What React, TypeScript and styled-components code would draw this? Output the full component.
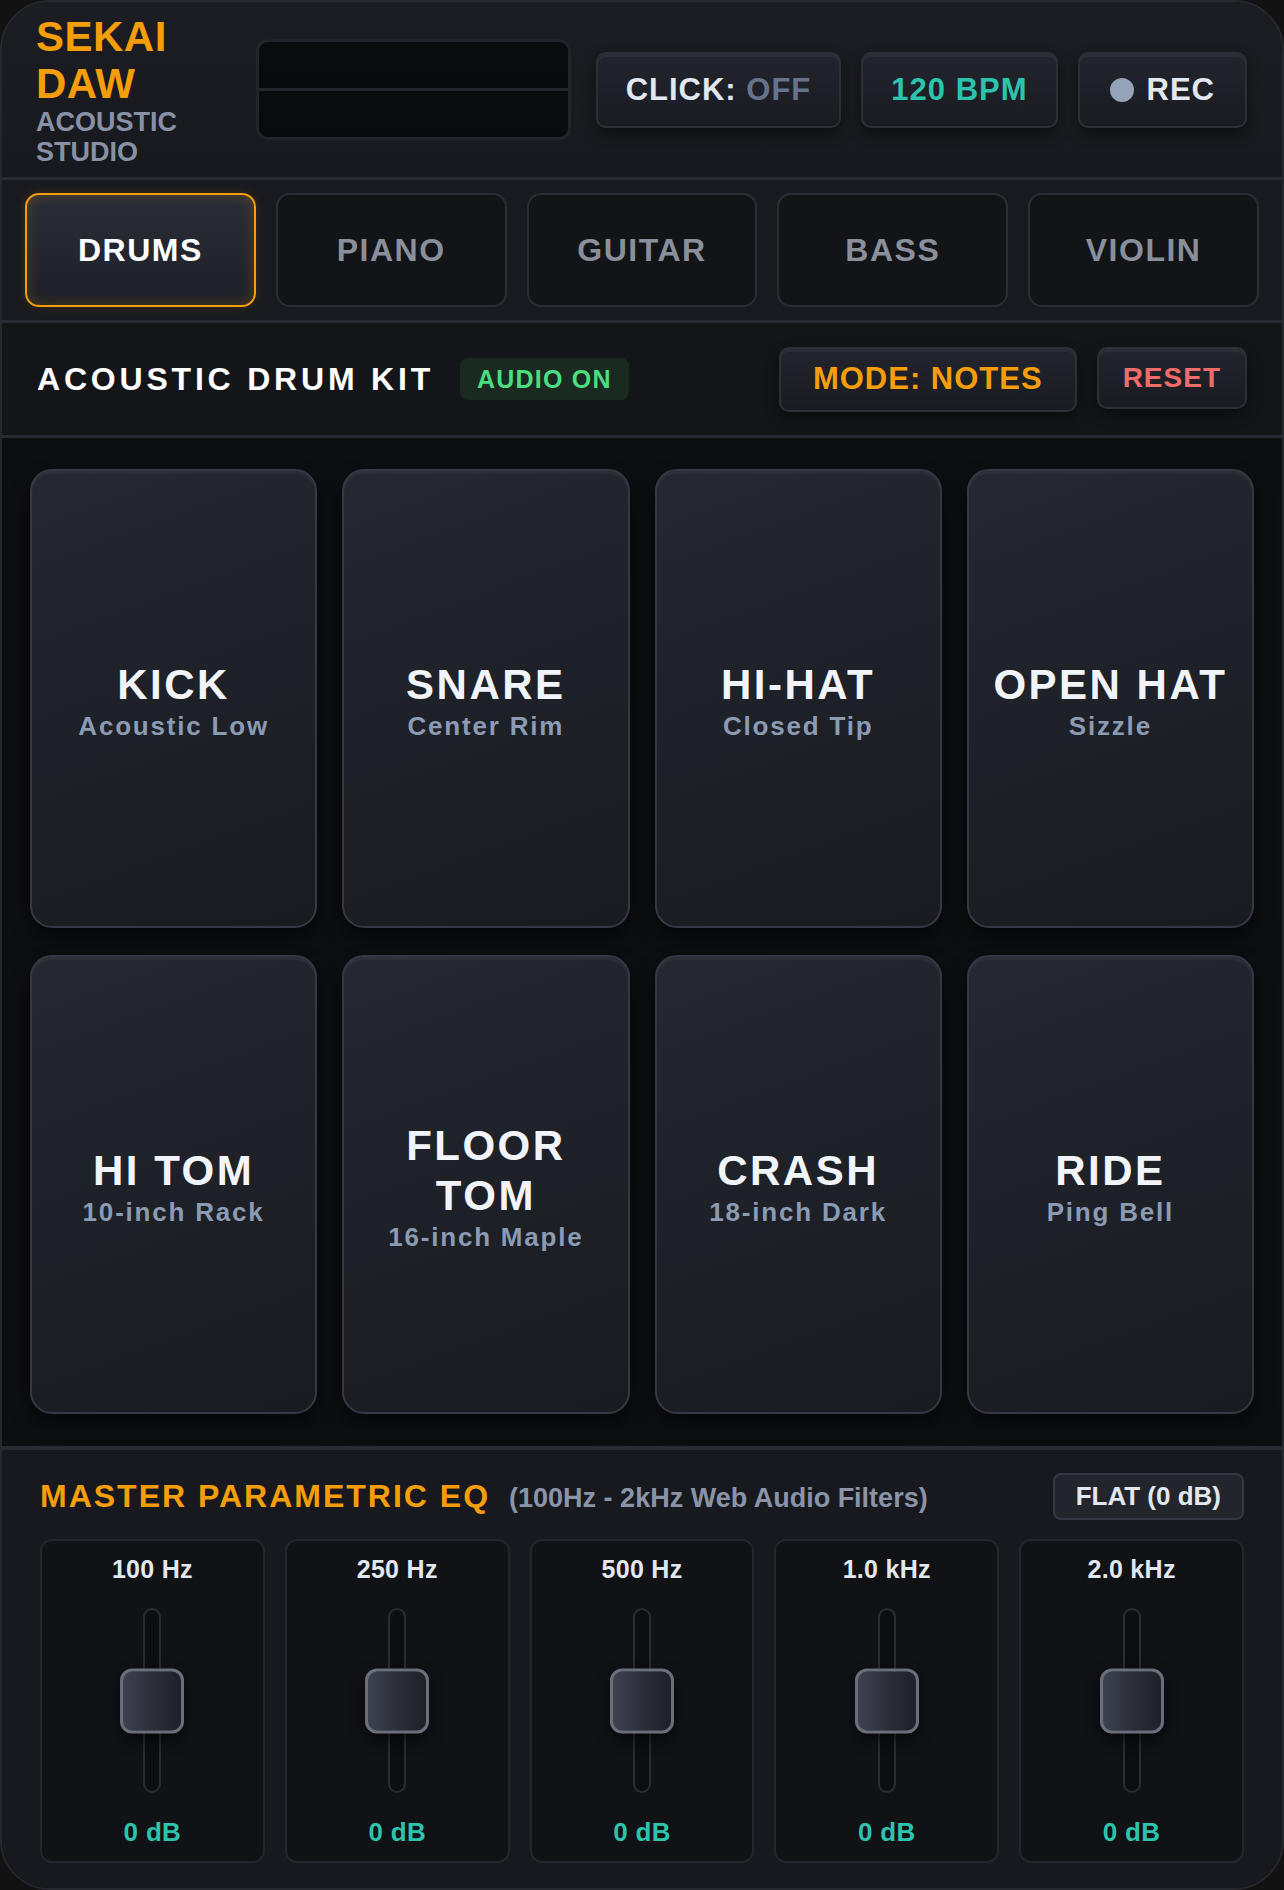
import React from "react";
import styled, { createGlobalStyle } from "styled-components";

const GlobalStyle = createGlobalStyle`
  html, body {
    margin: 0;
    padding: 0;
    background: #121212;
  }
  body {
    font-family: "Liberation Sans", Arial, Helvetica, sans-serif;
  }
  *, *::before, *::after {
    box-sizing: border-box;
  }
`;

const ORANGE = "#f59e0b";
const TEAL = "#2cc4ad";

const Shell = styled.div`
  width: 1284px;
  height: 1890px;
  border: 2px solid #27282e;
  border-radius: 50px;
  overflow: hidden;
  background: #0d0e11;
  display: flex;
  flex-direction: column;
  font-weight: 700;
`;

/* ---------- top bar ---------- */

const Header = styled.header`
  height: 178px;
  flex-shrink: 0;
  display: flex;
  align-items: center;
  padding: 0 35px 0 34px;
  background: linear-gradient(180deg, #1c1d22 0%, #18191e 100%);
  border-bottom: 3px solid #2a2b32;
`;

const Logo = styled.div`
  width: 198px;
  flex-shrink: 0;
  display: flex;
  flex-direction: column;
`;

const LogoTitle = styled.div`
  font-size: 42px;
  line-height: 47px;
  letter-spacing: 0.5px;
  color: ${ORANGE};
`;

const LogoSub = styled.div`
  font-size: 27px;
  line-height: 30px;
  color: #8891a5;
`;

const Display = styled.div`
  width: 315px;
  height: 101px;
  margin-left: 22px;
  border: 3px solid #23242b;
  border-radius: 12px;
  background: #0a0b0e;
  display: flex;
  flex-direction: column;
  overflow: hidden;
`;

const DisplayCell = styled.div<{ $divided?: boolean }>`
  flex: 1;
  background: linear-gradient(180deg, #0b0c0f, #090a0d);
  border-bottom: ${(p) => (p.$divided ? "3px solid #25262d" : "none")};
`;

const ButtonGroup = styled.div`
  margin-left: auto;
  display: flex;
  gap: 20px;
`;

const RaisedButton = styled.button<{ $h: number; $px: number; $size: number; $color: string }>`
  height: ${(p) => p.$h}px;
  padding: 0 ${(p) => p.$px}px;
  display: flex;
  align-items: center;
  justify-content: center;
  gap: 13px;
  border: 2px solid #2d2f37;
  border-radius: 10px;
  background: linear-gradient(180deg, #23252d 0%, #1a1b21 100%);
  box-shadow: inset 0 3px 0 rgba(255, 255, 255, 0.045), 0 6px 14px rgba(0, 0, 0, 0.45);
  font-family: inherit;
  font-weight: 700;
  font-size: ${(p) => p.$size}px;
  letter-spacing: 1px;
  color: ${(p) => p.$color};
  white-space: nowrap;
  cursor: pointer;
`;

const Dim = styled.span`
  color: #64748b;
`;

const RecDot = styled.span`
  width: 24px;
  height: 24px;
  border-radius: 50%;
  background: #94a3b8;
`;

/* ---------- instrument tabs ---------- */

const TabRow = styled.nav`
  flex-shrink: 0;
  display: grid;
  grid-template-columns: repeat(5, 1fr);
  gap: 20px;
  padding: 13px 23px;
  background: #191a1f;
  border-bottom: 3px solid #2a2b32;
`;

const Tab = styled.button<{ $active?: boolean }>`
  height: 114px;
  border-radius: 14px;
  border: 2px solid ${(p) => (p.$active ? ORANGE : "#2b2d34")};
  background: ${(p) =>
    p.$active ? "linear-gradient(180deg, #2a2d37 0%, #1e2028 100%)" : "#131418"};
  box-shadow: ${(p) =>
    p.$active
      ? "inset 0 0 14px rgba(245, 158, 11, 0.22), 0 0 10px rgba(245, 158, 11, 0.15)"
      : "none"};
  color: ${(p) => (p.$active ? "#ffffff" : "#8a8f9c")};
  font-family: inherit;
  font-weight: 700;
  font-size: 32px;
  letter-spacing: 1.5px;
  cursor: pointer;
`;

/* ---------- kit bar ---------- */

const KitBar = styled.div`
  height: 115px;
  flex-shrink: 0;
  display: flex;
  align-items: center;
  padding: 0 35px;
  background: #141519;
  border-bottom: 3px solid #2a2b32;
`;

const KitTitle = styled.h2`
  margin: 0;
  font-size: 32px;
  letter-spacing: 3.8px;
  color: #ffffff;
`;

const Badge = styled.span`
  margin-left: 26px;
  height: 42px;
  padding: 0 17px;
  display: inline-flex;
  align-items: center;
  border-radius: 8px;
  background: #1b2a21;
  color: #4ade80;
  font-size: 25px;
  letter-spacing: 1.2px;
`;

const KitActions = styled.div`
  margin-left: auto;
  display: flex;
  align-items: flex-start;
  gap: 20px;
`;

/* ---------- pads ---------- */

const PadGrid = styled.section`
  flex-shrink: 0;
  display: grid;
  grid-template-columns: repeat(4, 1fr);
  grid-auto-rows: 459px;
  gap: 27px 25px;
  padding: 31px 28px 32px;
  background: #0d0e11;
`;

const Pad = styled.button`
  display: flex;
  flex-direction: column;
  align-items: center;
  justify-content: center;
  padding: 5px 16px 0;
  border-radius: 22px;
  border: 2px solid #353945;
  background: linear-gradient(160deg, #252830 0%, #1e2027 55%, #1a1b20 100%);
  box-shadow: inset 0 3px 0 rgba(255, 255, 255, 0.04), 0 10px 18px rgba(0, 0, 0, 0.55);
  font-family: inherit;
  font-weight: 700;
  text-align: center;
  cursor: pointer;
`;

const PadName = styled.span`
  font-size: 42px;
  line-height: 50px;
  letter-spacing: 2.5px;
  color: #f1f5f9;
`;

const PadSub = styled.span`
  font-size: 26px;
  line-height: 32px;
  letter-spacing: 1.8px;
  color: #8b9bb3;
`;

/* ---------- equaliser ---------- */

const EqPanel = styled.section`
  flex: 1;
  display: flex;
  flex-direction: column;
  gap: 19px;
  padding: 23px 38px 25px;
  background: #18191e;
  border-top: 4px solid #2a2b32;
`;

const EqHeader = styled.div`
  height: 47px;
  display: flex;
  align-items: center;
  justify-content: space-between;
`;

const EqTitleGroup = styled.div`
  display: flex;
  align-items: baseline;
  gap: 19px;
`;

const EqTitle = styled.h3`
  margin: 0;
  font-size: 32px;
  letter-spacing: 2px;
  color: ${ORANGE};
`;

const EqNote = styled.span`
  font-size: 27px;
  color: #8a94a8;
`;

const FlatButton = styled.button`
  height: 47px;
  padding: 0 21px;
  border-radius: 8px;
  border: 2px solid #353843;
  background: #22252c;
  color: #e2e8f0;
  font-family: inherit;
  font-weight: 700;
  font-size: 26px;
  cursor: pointer;
`;

const BandGrid = styled.div`
  display: grid;
  grid-template-columns: repeat(5, 1fr);
  gap: 20px;
`;

const Band = styled.div`
  height: 324px;
  display: flex;
  flex-direction: column;
  align-items: center;
  gap: 24px;
  padding: 13px 13px 9px;
  border-radius: 12px;
  border: 2px solid #25262d;
  background: #111216;
`;

const BandLabel = styled.span<{ $color: string; $size: number }>`
  font-size: ${(p) => p.$size}px;
  line-height: 30px;
  letter-spacing: 0.3px;
  color: ${(p) => p.$color};
`;

const Fader = styled.div`
  position: relative;
  width: 64px;
  height: 185px;
  display: flex;
  justify-content: center;
`;

const FaderTrack = styled.div`
  width: 18px;
  height: 100%;
  border-radius: 9px;
  border: 2px solid #2a2c33;
  background: #0d0e12;
`;

const FaderThumb = styled.div`
  position: absolute;
  left: 0;
  width: 64px;
  height: 65px;
  transform: translateY(-50%);
  border-radius: 12px;
  border: 3px solid #6b6f7c;
  background: linear-gradient(90deg, #3e4251 0%, #2a2d37 55%, #1f2129 100%);
  box-shadow: 0 6px 14px rgba(0, 0, 0, 0.6);
`;

const tabs = ["DRUMS", "PIANO", "GUITAR", "BASS", "VIOLIN"];

const pads = [
  { name: "KICK", sub: "Acoustic Low" },
  { name: "SNARE", sub: "Center Rim" },
  { name: "HI-HAT", sub: "Closed Tip" },
  { name: "OPEN HAT", sub: "Sizzle" },
  { name: "HI TOM", sub: "10-inch Rack" },
  { name: "FLOOR TOM", sub: "16-inch Maple" },
  { name: "CRASH", sub: "18-inch Dark" },
  { name: "RIDE", sub: "Ping Bell" },
];

const bands = [
  { freq: "100 Hz", gain: 0 },
  { freq: "250 Hz", gain: 0 },
  { freq: "500 Hz", gain: 0 },
  { freq: "1.0 kHz", gain: 0 },
  { freq: "2.0 kHz", gain: 0 },
];

// gain range is ±12 dB; 0 dB sits in the middle of the track
const thumbTop = (gain: number) => `${50 - (gain / 12) * 50}%`;

export default function App() {
  return (
    <>
      <GlobalStyle />
      <Shell>
        <Header>
          <Logo>
            <LogoTitle>SEKAI DAW</LogoTitle>
            <LogoSub>ACOUSTIC STUDIO</LogoSub>
          </Logo>
          <Display>
            <DisplayCell $divided />
            <DisplayCell />
          </Display>
          <ButtonGroup>
            <RaisedButton $h={76} $px={28} $size={31} $color="#e2e8f0">
              <span>
                CLICK: <Dim>OFF</Dim>
              </span>
            </RaisedButton>
            <RaisedButton $h={76} $px={28} $size={31} $color={TEAL}>
              120 BPM
            </RaisedButton>
            <RaisedButton $h={76} $px={30} $size={31} $color="#e2e8f0">
              <RecDot />
              REC
            </RaisedButton>
          </ButtonGroup>
        </Header>

        <TabRow>
          {tabs.map((t) => (
            <Tab key={t} $active={t === "DRUMS"}>
              {t}
            </Tab>
          ))}
        </TabRow>

        <KitBar>
          <KitTitle>ACOUSTIC DRUM KIT</KitTitle>
          <Badge>AUDIO ON</Badge>
          <KitActions>
            <RaisedButton $h={65} $px={32} $size={31} $color={ORANGE}>
              MODE: NOTES
            </RaisedButton>
            <RaisedButton $h={62} $px={24} $size={28} $color="#f16b6b">
              RESET
            </RaisedButton>
          </KitActions>
        </KitBar>

        <PadGrid>
          {pads.map((p) => (
            <Pad key={p.name}>
              <PadName>{p.name}</PadName>
              <PadSub>{p.sub}</PadSub>
            </Pad>
          ))}
        </PadGrid>

        <EqPanel>
          <EqHeader>
            <EqTitleGroup>
              <EqTitle>MASTER PARAMETRIC EQ</EqTitle>
              <EqNote>(100Hz - 2kHz Web Audio Filters)</EqNote>
            </EqTitleGroup>
            <FlatButton>FLAT (0 dB)</FlatButton>
          </EqHeader>
          <BandGrid>
            {bands.map((b) => (
              <Band key={b.freq}>
                <BandLabel $color="#e2e8f0" $size={25}>
                  {b.freq}
                </BandLabel>
                <Fader>
                  <FaderTrack />
                  <FaderThumb style={{ top: thumbTop(b.gain) }} />
                </Fader>
                <BandLabel $color={TEAL} $size={26}>
                  {b.gain} dB
                </BandLabel>
              </Band>
            ))}
          </BandGrid>
        </EqPanel>
      </Shell>
    </>
  );
}
